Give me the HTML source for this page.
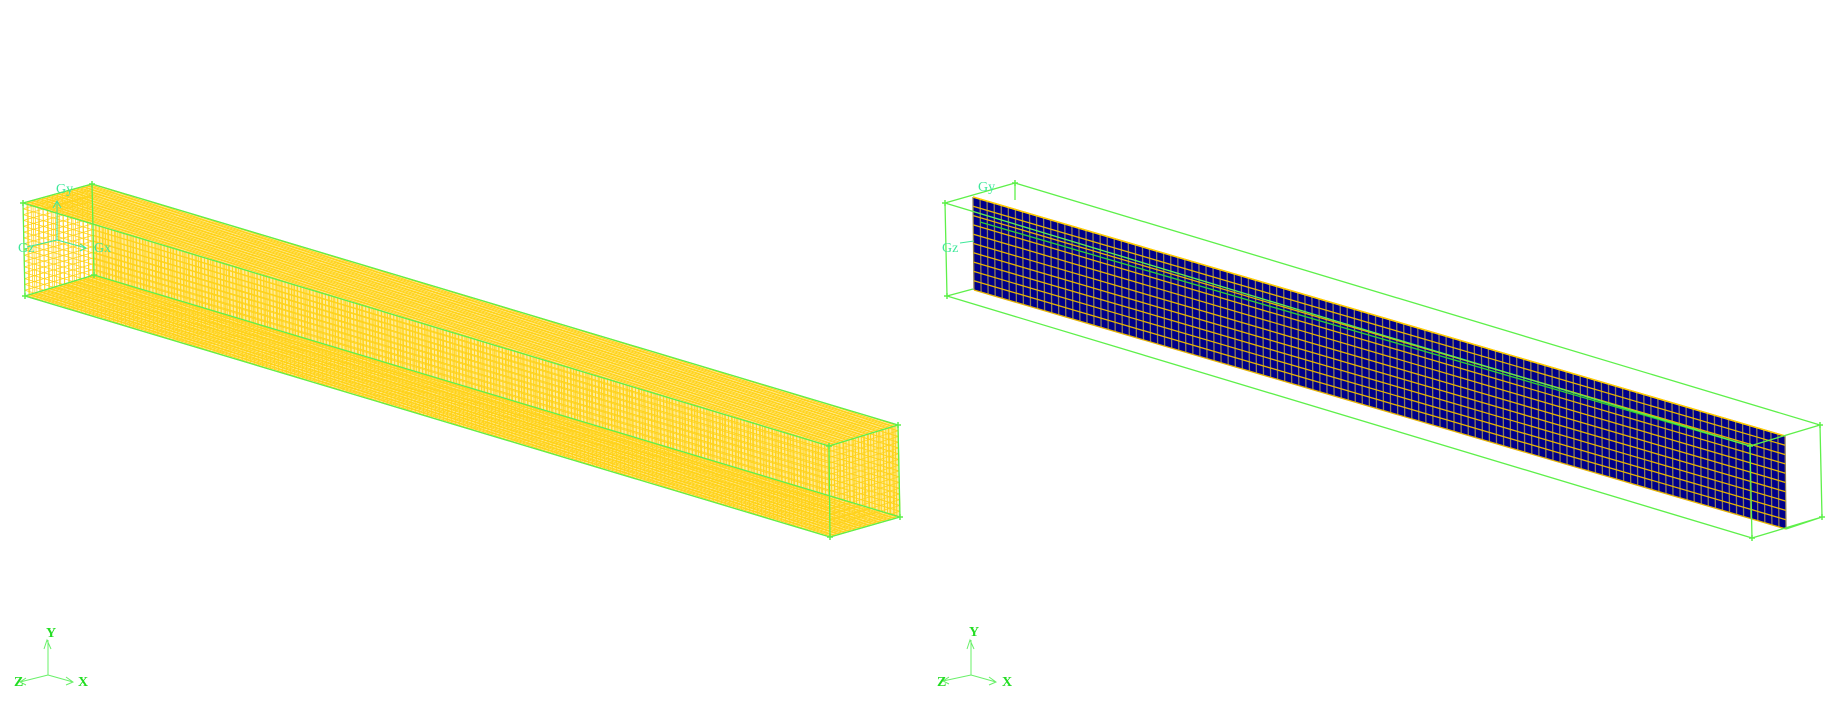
<!DOCTYPE html>
<html><head><meta charset="utf-8"><style>
html,body{margin:0;padding:0;background:#fff;width:1845px;height:720px;overflow:hidden}
svg{display:block}
text{font-family:"Liberation Serif",serif;font-size:14px}
</style></head><body>
<svg id="s" width="1845" height="720" xmlns="http://www.w3.org/2000/svg">
<g id="mesh"></g>
<g id="box" stroke="#5ef04a" stroke-width="1.3" fill="none"></g>
<g fill="#3ee89a"><text x="56" y="193">Gy</text><text x="18" y="252">Gz</text><text x="94" y="252">Gx</text>
<text x="978" y="191">Gy</text><text x="942" y="252">Gz</text></g>
<g stroke="#3ee89a" stroke-width="1" fill="none">
<path d="M57 240 V201 M53 208 L57 201 L61 208 M57 240 L86 248 M80 244 L86 248 L80 251 M57 240 L27 247"/>
<path d="M960 243 L974 241"/></g>
<g stroke="#6af06a" stroke-width="1" fill="none">
<path d="M48 675 V640 M44 649 L47 640 L51 649 M48 675 L73 682 M66 677 L73 682 L66 685 M48 675 L20 682 M26 678 L20 682 L26 685"/>
<path d="M971 675 V640 M967 649 L970 640 L974 649 M971 675 L996 682 M989 677 L996 682 L989 685 M971 675 L943 681 M949 677 L943 681 L949 684"/></g>
<g fill="#22dd22" font-weight="bold"><text x="46" y="637">Y</text><text x="78" y="686">X</text><text x="14" y="686">Z</text>
<text x="969" y="636">Y</text><text x="1002" y="686">X</text><text x="937" y="686">Z</text></g>
</svg>
<script>
var NS="http://www.w3.org/2000/svg",M=document.getElementById('mesh'),B=document.getElementById('box');
function el(p,t,a){var e=document.createElementNS(NS,t);for(var k in a)e.setAttribute(k,a[k]);p.appendChild(e);return e}
function lerp(a,b,t){return [a[0]+(b[0]-a[0])*t,a[1]+(b[1]-a[1])*t]}
function quad(p,fill,nu,nv,cu,cv,w){
 el(M,'polygon',{points:p.map(function(q){return q.join(',')}).join(' '),fill:fill});
 var d='';
 for(var i=0;i<=nu;i++){var t=i/nu;var a=lerp(p[0],p[1],t),b=lerp(p[3],p[2],t);d+='M'+a[0].toFixed(1)+' '+a[1].toFixed(1)+'L'+b[0].toFixed(1)+' '+b[1].toFixed(1);}
 el(M,'path',{d:d,stroke:cu,'stroke-width':w,fill:'none'});
 d='';
 for(var j=0;j<=nv;j++){var t=j/nv;var a=lerp(p[0],p[3],t),b=lerp(p[1],p[2],t);d+='M'+a[0].toFixed(1)+' '+a[1].toFixed(1)+'L'+b[0].toFixed(1)+' '+b[1].toFixed(1);}
 el(M,'path',{d:d,stroke:cv,'stroke-width':w,fill:'none'});
}
var FTL=[23,203],FBL=[25,296],BTL=[92,184],BBL=[94,275],FTR=[829,446],FBR=[830,537],BTR=[898,425],BBR=[900,517];
var Y='#ffd21a',P='#ffec9a';
quad([BTL,BTR,BBR,BBL],P,260,16,Y,Y,1);
quad([BBL,BBR,FBR,FBL],P,260,14,Y,Y,1);
quad([FTL,FTR,BTR,BTL],P,260,14,Y,Y,1);
quad([FTL,FTR,FBR,FBL],'none',200,16,Y,Y,0.8);
quad([FTL,BTL,BBL,FBL],'none',14,16,Y,Y,0.8);
quad([FTR,BTR,BBR,FBR],'none',14,16,Y,Y,0.8);
quad([[973,197],[1785,436],[1786,529],[974,290]],'#00008a',115,10,'#8a7a5a','#e6b400',1.3);
el(M,'path',{d:'M973 197 L1785 436',stroke:'#ffcc00','stroke-width':1.5,fill:'none'});
el(M,'path',{d:'M980 222 L1750 446',stroke:'#30d030','stroke-width':1.3,fill:'none'});
function edges(v){var d='';v.forEach(function(e){d+='M'+e[0]+'L'+e[1]});el(B,'path',{d:d})}
edges([[FTL,FTR],[FBL,FBR],[BTL,BTR],[BBL,BBR],[FTL,FBL],[BTL,BBL],[FTL,BTL],[FBL,BBL],[FTR,FBR],[BTR,BBR],[FTR,BTR],[FBR,BBR]]);
var a=[945,203],b=[947,296],c=[1015,183],f=[1750,446],g=[1752,538],h=[1820,425],k=[1822,517];
edges([[a,f],[b,g],[c,h],[a,b],[a,c],[b,[973,289]],[c,[1015,200]],[f,g],[h,k],[f,h],[g,k],[[1786,529],k]]);
function plus(p){el(B,'path',{d:'M'+(p[0]-3)+' '+p[1]+'h6M'+p[0]+' '+(p[1]-3)+'v6','stroke-width':1.5})}
[FTL,FBL,BTL,BBL,FTR,FBR,BTR,BBR,a,b,c,f,g,h,k].forEach(plus);
</script>
</body></html>
